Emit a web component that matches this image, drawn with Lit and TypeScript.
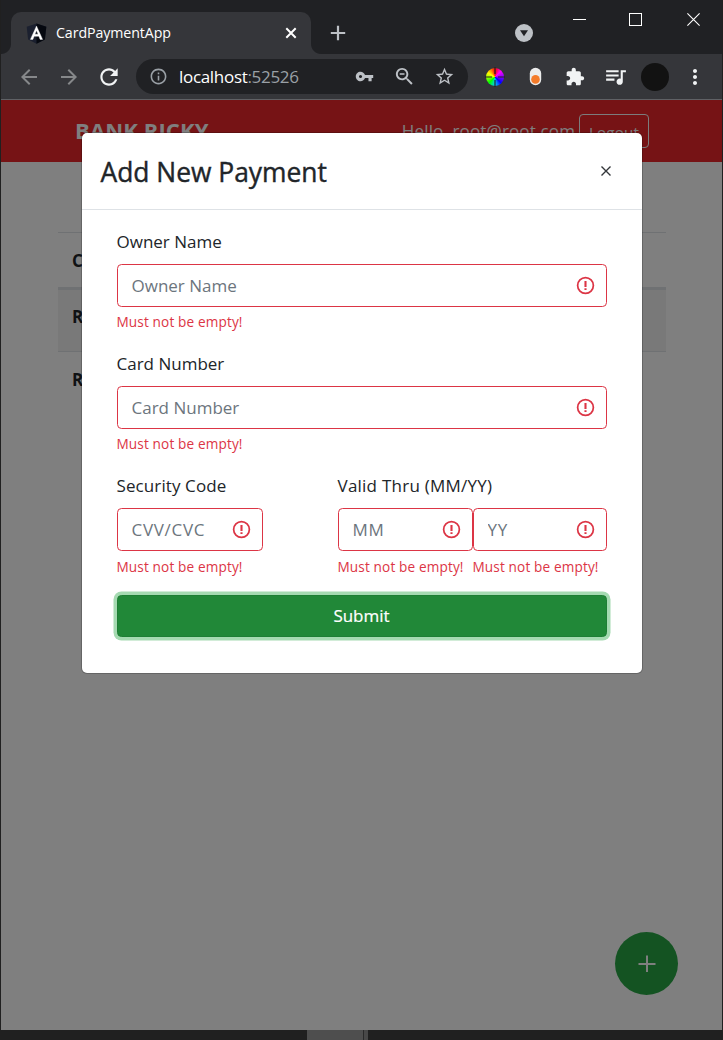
import { LitElement, html, css } from "lit";
import { customElement } from "lit/decorators.js";

const P = {
  back: "M20 11H7.83l5.59-5.59L12 4l-8 8 8 8 1.41-1.41L7.83 13H20v-2z",
  forward: "M12 4l-1.41 1.41L16.17 11H4v2h12.17l-5.58 5.59L12 20l8-8z",
  reload: "M17.65 6.35C16.2 4.9 14.21 4 12 4c-4.42 0-7.99 3.58-7.99 8s3.57 8 7.99 8c3.73 0 6.84-2.55 7.73-6h-2.08c-.82 2.33-3.04 4-5.65 4-3.31 0-6-2.69-6-6s2.69-6 6-6c1.66 0 3.14.69 4.22 1.78L13 11h7V4l-2.35 2.35z",
  info: "M11 7h2v2h-2zm0 4h2v6h-2zm1-9C6.48 2 2 6.48 2 12s4.48 10 10 10 10-4.48 10-10S17.52 2 12 2zm0 18c-4.41 0-8-3.59-8-8s3.59-8 8-8 8 3.59 8 8-3.59 8-8 8z",
  key: "M12.65 10C11.83 7.67 9.61 6 7 6c-3.31 0-6 2.69-6 6s2.69 6 6 6c2.61 0 4.83-1.67 5.65-4H17v4h4v-4h2v-4H12.65zM7 14c-1.1 0-2-.9-2-2s.9-2 2-2 2 .9 2 2-.9 2-2 2z",
  zoom: "M15.5 14h-.79l-.28-.27C15.41 12.59 16 11.11 16 9.5 16 5.91 13.09 3 9.5 3S3 5.91 3 9.5 5.91 16 9.5 16c1.61 0 3.09-.59 4.23-1.57l.27.28v.79l5 4.99L20.49 19l-4.99-5zm-6 0C7.01 14 5 11.99 5 9.5S7.01 5 9.5 5 14 7.01 14 9.5 11.99 14 9.5 14zM7 8.7h5v1.6H7z",
  star: "M22 9.24l-7.19-.62L12 2 9.19 8.63 2 9.24l5.46 4.73L5.82 21 12 17.27 18.18 21l-1.63-7.03L22 9.24zM12 15.4l-3.76 2.27 1-4.28-3.32-2.88 4.38-.38L12 6.1l1.71 4.04 4.38.38-3.32 2.88 1 4.28L12 15.4z",
  puzzle: "M20.5 11H19V7c0-1.1-.9-2-2-2h-4V3.5C13 2.12 11.88 1 10.5 1S8 2.12 8 3.5V5H4c-1.1 0-1.99.9-1.99 2v3.8H3.5c1.49 0 2.7 1.21 2.7 2.7s-1.21 2.7-2.7 2.7H2V20c0 1.1.9 2 2 2h3.8v-1.5c0-1.49 1.21-2.7 2.7-2.7 1.49 0 2.7 1.21 2.7 2.7V22H17c1.1 0 2-.9 2-2v-4h1.5c1.38 0 2.5-1.12 2.5-2.5S21.88 11 20.5 11z",
  music: "M15 6H3v2h12V6zm0 4H3v2h12v-2zM3 16h8v-2H3v2zM17 6v8.18c-.31-.11-.65-.18-1-.18-1.66 0-3 1.34-3 3s1.34 3 3 3 3-1.34 3-3V8h3V6h-5z",
  more: "M12 8c1.1 0 2-.9 2-2s-.9-2-2-2-2 .9-2 2 .9 2 2 2zm0 2c-1.1 0-2 .9-2 2s.9 2 2 2 2-.9 2-2-.9-2-2-2zm0 6c-1.1 0-2 .9-2 2s.9 2 2 2 2-.9 2-2-.9-2-2-2z",
};

const icon = (d: string, size: number, color: string) =>
  html`<svg width=${size} height=${size} viewBox="0 0 24 24" fill=${color}><path d=${d}></path></svg>`;

@customElement("browser-chrome")
class BrowserChrome extends LitElement {
  static styles = css`
    :host { display: block; font-family: "Open Sans", "Noto Sans", sans-serif; }
    svg { display: block; flex: none; }
    .titlebar { display: flex; height: 54px; background: #202124; }
    .foot { width: 10px; height: 10px; align-self: flex-end; }
    .foot.l { background: radial-gradient(circle at 0 0, #202124 9.5px, #35363a 10.5px); }
    .foot.r { background: radial-gradient(circle at 100% 0, #202124 9.5px, #35363a 10.5px); }
    .tab { box-sizing: border-box; width: 300px; height: 42px; margin-top: 12px; padding: 0 13px 0 15px; background: #35363a; border-radius: 10px 10px 0 0; display: flex; align-items: center; }
    .name { flex: 1; margin: -2px 0 0 9px; color: #fff; font-size: 14.2px; letter-spacing: -0.08px; white-space: nowrap; }
    .new { width: 34px; display: flex; justify-content: center; align-items: center; height: 65px; }
    .gap { flex: 1; }
    .drop { margin: 24px 19px 0 0; }
    .controls { display: grid; grid-template-columns: 55px 57px 58px; height: 39px; place-items: center; }
    .toolbar { display: flex; align-items: center; height: 45px; padding-left: 8px; background: #35363a; border-bottom: 1px solid #5f6165; }
    .slot { width: 40px; display: flex; justify-content: center; flex: none; }
    .omni { display: flex; align-items: center; box-sizing: border-box; width: 332px; height: 35px; margin: 0 7px; padding: 0 4px 0 13px; border-radius: 18px; background: #202124; }
    .url { flex: 1; margin-left: 11px; font-size: 17px; letter-spacing: -0.31px; color: #fff; white-space: nowrap; }
    .port { color: #9aa0a6; }
    .avatar { width: 28px; height: 28px; border-radius: 50%; background: #121212; }
    .wheel { display: grid; grid-template: 18px / 18px; place-items: center; width: 18px; height: 18px; border-radius: 50%; background: conic-gradient(#f00, #f0f 45deg, #80f 90deg, #00f 135deg, #0cf 180deg, #0f0 225deg, #af0 270deg, #ff0 300deg, #f80 330deg, #f00); }
  `;
  render() {
    return html`
      <div class="titlebar">
        <div class="foot l"></div>
        <div class="tab">
          <svg width="21" height="21" viewBox="0 0 21 21">
            <path d="M10.5 .5L20.3 3.8 18.9 16.4 10.5 20.8 2.1 16.4.7 3.8z" fill="#1b202f"></path>
            <path d="M10.5 .5L20.3 3.8 18.9 16.4 10.5 20.8z" fill="#05080f"></path>
            <path d="M10.5 3L4.4 16.4h2.5l1.2-3.1h4.8l1.2 3.1h2.5zM10.5 7.4l1.6 3.9H8.9z" fill="#fff" stroke="#fff" stroke-width=".4"></path>
          </svg>
          <span class="name">CardPaymentApp</span>
          <svg width="14" height="14" viewBox="0 0 14 14" stroke="#fff" stroke-width="2"><path d="M2.3 2.3l9.4 9.4M11.7 2.3l-9.4 9.4"></path></svg>
        </div>
        <div class="foot r"></div>
        <div class="new"><svg width="16" height="16" viewBox="0 0 16 16" stroke="#bdc1c6" stroke-width="2.2"><path d="M8 .8v14.4M.8 8h14.4"></path></svg></div>
        <div class="gap"></div>
        <svg class="drop" width="18" height="18" viewBox="0 0 18 18"><circle cx="9" cy="9" r="9" fill="#bdc1c6"></circle><path d="M5 6.2h8L9 12.2z" fill="#202124"></path></svg>
        <div class="controls">
          <svg width="13" height="13" viewBox="0 0 13 13"><path d="M0 6.5h13" stroke="#fff"></path></svg>
          <svg width="13" height="13" viewBox="0 0 13 13"><rect x=".5" y=".5" width="12" height="12" fill="none" stroke="#fff"></rect></svg>
          <svg width="13" height="13" viewBox="0 0 13 13"><path d="M.4 .4l12.2 12.2M12.6 .4L.4 12.6" stroke="#fff" stroke-width="1.1"></path></svg>
        </div>
      </div>
      <div class="toolbar">
        <div class="slot">${icon(P.back, 24, "#86888a")}</div>
        <div class="slot">${icon(P.forward, 24, "#86888a")}</div>
        <div class="slot">${icon(P.reload, 26, "#f1f3f4")}</div>
        <div class="omni">
          ${icon(P.info, 19, "#9aa0a6")}
          <span class="url">localhost<span class="port">:52526</span></span>
          <div class="slot">${icon(P.key, 19, "#bdc1c6")}</div>
          <div class="slot">${icon(P.zoom, 23, "#bdc1c6")}</div>
          <div class="slot">${icon(P.star, 21, "#bdc1c6")}</div>
        </div>
        <div class="slot"><div class="wheel"><svg width="20" height="20" viewBox="0 0 20 20"><path d="M10 0v7M10 13v7M0 10h7M13 10h7" stroke="#222" stroke-width="1.2"></path></svg></div></div>
        <div class="slot"><svg width="13" height="19" viewBox="0 0 13 19"><rect x=".8" y=".8" width="11.4" height="17.4" rx="5.7" fill="#ececec"></rect><circle cx="6.5" cy="12.4" r="4.3" fill="#f47b2a"></circle></svg></div>
        <div class="slot">${icon(P.puzzle, 20, "#f1f3f4")}</div>
        <div class="slot">${icon(P.music, 25, "#f1f3f4")}</div>
        <div class="slot"><div class="avatar"></div></div>
        <div class="slot">${icon(P.more, 24, "#f1f3f4")}</div>
      </div>`;
  }
}

@customElement("invalid-field")
class InvalidField extends LitElement {
  static properties = { hint: {} };
  declare hint: string;
  static styles = css`
    :host { display: block; min-width: 0; }
    .box { display: flex; align-items: center; box-sizing: border-box; height: 43px; padding: 0 9.5px 0 14px; border: 1px solid #dc3545; border-radius: 4.5px; background: #fff; }
    input { flex: 1; min-width: 0; padding: 0; border: 0; outline: 0; background: none; font: 17px "Open Sans", "Noto Sans", sans-serif; letter-spacing: var(--hint-spacing, 0); }
    input::placeholder { color: #6c757d; opacity: 1; }
    .error { height: 22px; margin-top: var(--error-gap, 4px); font-size: 13.6px; line-height: 22px; letter-spacing: 0.14px; color: #dc3545; white-space: nowrap; }
    svg { flex: none; margin-top: -1px; }
  `;
  render() {
    return html`
      <div class="box">
        <input placeholder=${this.hint} />
        <svg width="21" height="21" viewBox="0 0 12 12" fill="#dc3545"><circle cx="6" cy="6" r="4.5" fill="none" stroke="#dc3545"></circle><path d="M5.4 3.4h1.2v3.5H5.4zM5.4 7.5h1.2v1.1H5.4z"></path></svg>
      </div>
      <div class="error">Must not be empty!</div>`;
  }
}

@customElement("app-root")
class AppRoot extends LitElement {
  static styles = css`
    :host { display: block; width: 723px; height: 1040px; overflow: hidden; background: #202020; font-family: "Open Sans", "Noto Sans", sans-serif; font-size: 17px; color: #212529; }
    .window { margin: 0 1px; }
    .page { position: relative; height: 930px; background: #fff; overflow: hidden; }
    .nav { display: flex; box-sizing: border-box; height: 62px; padding: 14px 73px 0 74px; background: #ec262a; color: #fff; align-items: flex-start; white-space: nowrap; }
    .brand { flex: 1; font-size: 22px; line-height: 33px; font-weight: 700; letter-spacing: 0.12px; }
    .hello { line-height: 33px; margin-right: 4px; letter-spacing: 0.135px; }
    .logout { box-sizing: border-box; width: 70px; height: 34px; border: 1px solid #f8f9fa; border-radius: 4px; color: #f8f9fa; text-align: center; font-size: 15.2px; line-height: 34px; letter-spacing: 0.15px; }
    .table { margin: 70px 56px 0 57px; font-weight: 700; }
    .row { box-sizing: border-box; height: 63px; padding-left: 14px; border-top: 1px solid #dee2e6; line-height: 56px; }
    .row.head { height: 57px; border-bottom: 2px solid #dee2e6; }
    .row.odd { height: 62px; background: #f2f2f2; line-height: 54px; }
    .fab { position: absolute; left: 614px; top: 832px; width: 63px; height: 63px; border-radius: 50%; background: #28a745; display: grid; place-items: center; }
    .shade { position: absolute; inset: 0; background: rgba(0, 0, 0, 0.5); display: flex; justify-content: center; align-items: flex-start; }
    .modal { box-sizing: border-box; width: 560px; height: 540px; margin-top: 33px; border-radius: 5px; background: #fff; box-shadow: 0 0 0 1px rgba(0, 0, 0, 0.2); }
    .head-row { display: flex; box-sizing: border-box; height: 77px; padding: 0 31px 0 18px; justify-content: space-between; align-items: center; border-bottom: 1px solid #dee2e6; }
    h4 { margin: 0; padding: 2px 0 0 1px; font-size: 26.4px; font-weight: 500; -webkit-text-stroke: 0.4px #212529; }
    form { padding: 18px 35px 0; }
    label { display: block; height: 27px; line-height: 27px; margin-bottom: 9px; white-space: nowrap; }
    .group { height: 122px; }
    .pair { display: grid; grid-template-columns: 146px 269px; justify-content: space-between; height: 123px; --error-gap: 5px; }
    .cvc { letter-spacing: 0.1px; --hint-spacing: 0.7px; }
    .valid { letter-spacing: 0.24px; --hint-spacing: 0.7px; }
    .thru { display: grid; grid-template-columns: 135px 134px; }
    .submit { display: block; width: 100%; height: 42px; padding: 0 0 2px; border: 1px solid #1e7e34; border-radius: 4.5px; background: #218838; color: #fff; font: 500 17px "Open Sans", "Noto Sans", sans-serif; -webkit-text-stroke: 0.2px #fff; box-shadow: 0 0 0 3.5px #a5dab1; }
    .taskbar { display: flex; height: 10px; }
    .item { width: 56px; margin-left: 306px; background: #4e4e4e; border-right: 1px solid #2a2a2a; }
    .next { width: 4px; background: #484848; }
  `;
  render() {
    return html`
      <div class="window">
        <browser-chrome></browser-chrome>
        <div class="page">
          <div class="nav"><div class="brand">BANK RICKY</div><div class="hello">Hello, root@root.com</div><div class="logout">Logout</div></div>
          <div class="table"><div class="row head">Card Owner</div><div class="row odd">Ricky</div><div class="row">Ricky</div></div>
          <div class="fab"><svg width="18" height="18" viewBox="0 0 18 18" stroke="#fff" stroke-width="2"><path d="M9 .5v16.5M.5 9h17"></path></svg></div>
          <div class="shade">
            <div class="modal">
              <div class="head-row"><h4>Add New Payment</h4><svg width="10" height="10" viewBox="0 0 10 10" stroke="#33363a" stroke-width="1.4"><path d="M.5 .5l9 9M9.5 .5l-9 9"></path></svg></div>
              <form>
                <div class="group"><label>Owner Name</label><invalid-field hint="Owner Name"></invalid-field></div>
                <div class="group"><label>Card Number</label><invalid-field hint="Card Number"></invalid-field></div>
                <div class="pair">
                  <div class="cvc"><label>Security Code</label><invalid-field hint="CVV/CVC"></invalid-field></div>
                  <div class="valid"><label>Valid Thru (MM/YY)</label><div class="thru"><invalid-field hint="MM"></invalid-field><invalid-field hint="YY"></invalid-field></div></div>
                </div>
                <button class="submit" type="button">Submit</button>
              </form>
            </div>
          </div>
        </div>
        <div class="taskbar"><div class="item"></div><div class="next"></div></div>
      </div>`;
  }
}
